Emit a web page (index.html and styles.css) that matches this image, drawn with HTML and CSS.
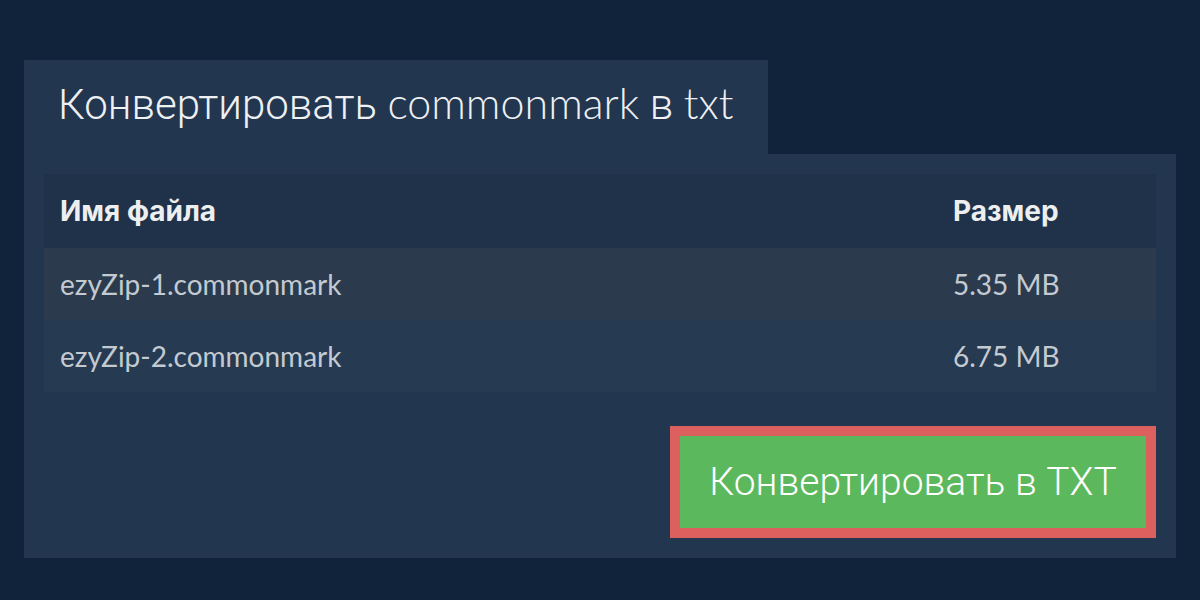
FILE: index.html
```html
<!DOCTYPE html>
<html lang="ru">
<head>
<meta charset="utf-8">
<title>Конвертировать commonmark в txt</title>
<link rel="stylesheet" href="styles.css">
</head>
<body>
<div class="page">
  <div class="tab">
    <h1 class="title"><span class="cy">Конвертировать</span> <span class="la">commonmark</span> <span class="cy">в</span> <span class="la">txt</span></h1>
  </div>
  <div class="panel">
    <table class="files">
      <thead>
        <tr class="head"><th class="name">Имя файла</th><th class="size">Размер</th></tr>
      </thead>
      <tbody>
        <tr class="row odd"><td class="name">ezyZip-1.commonmark</td><td class="size">5.35 MB</td></tr>
        <tr class="row even"><td class="name">ezyZip-2.commonmark</td><td class="size">6.75 MB</td></tr>
      </tbody>
    </table>
    <div class="actions">
      <button class="convert">Конвертировать в TXT</button>
    </div>
  </div>
</div>
</body>
</html>
```

FILE: styles.css
```css
html, body {
  margin: 0;
  padding: 0;
  background: #10233a;
}
.page {
  padding: 60px 24px 0 24px;
}
.tab {
  display: inline-block;
  background: #22364f;
  width: 744px;
  height: 94px;
  box-sizing: border-box;
  padding: 0 34px;
}
.title {
  margin: 0;
  font-weight: 300;
  font-size: 42px;
  line-height: 86px;
  color: #eef0f2;
  white-space: nowrap;
}
.cy {
  font-family: "Roboto", "Inter", sans-serif;
  font-weight: 300;
}
.la {
  font-family: "Lato", "Roboto", sans-serif;
  font-weight: 300;
  font-size: 43px;
}
.panel {
  background: #22364f;
  padding: 20px 20px 20px 20px;
}
.files {
  width: 100%;
  border-collapse: collapse;
  border-spacing: 0;
}
.head {
  background: #1f3249;
  height: 74px;
}
.head th {
  font-family: "Inter", "Noto Sans", sans-serif;
  font-weight: 700;
  font-size: 28px;
  color: #eceef0;
  text-align: left;
  padding: 0 16px;
}
.row {
  height: 72px;
}
.row.odd { background: #2b3b4d; }
.row.even { background: #263a52; }
.row td {
  font-family: "Lato", "Noto Sans", sans-serif;
  font-size: 28px;
  color: #c4cad1;
  padding: 0 16px;
}
.files .size {
  width: 187px;
}
.actions {
  display: flex;
  justify-content: flex-end;
  margin-top: 34px;
}
.convert {
  width: 486px;
  height: 112px;
  box-sizing: border-box;
  background: #5cb85c;
  border: 10px solid #dc605d;
  color: #ffffff;
  font-family: "Roboto", "Inter", sans-serif;
  font-weight: 300;
  font-size: 39px;
  padding: 0;
  cursor: pointer;
}
```
